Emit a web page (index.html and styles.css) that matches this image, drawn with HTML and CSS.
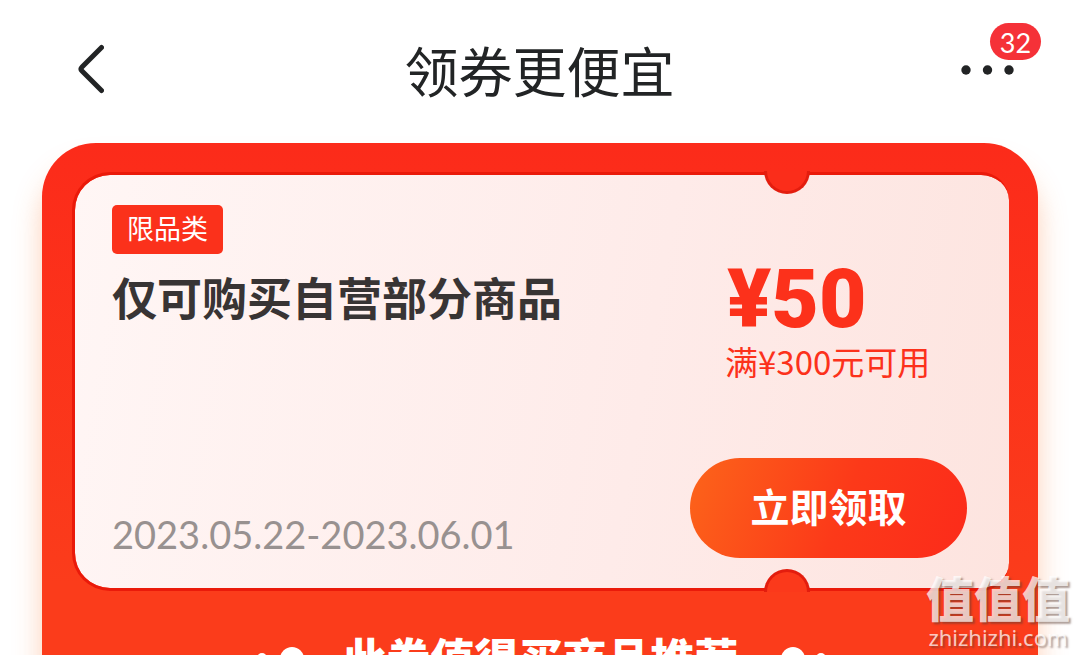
FILE: index.html
```html
<!DOCTYPE html>
<html lang="zh-CN">
<head>
<meta charset="utf-8">
<meta name="viewport" content="width=device-width, initial-scale=1">
<title>领券更便宜</title>
<link rel="stylesheet" href="styles.css">
</head>
<body>
<div class="app">
  <header class="header">
    <button class="icon-button" type="button" aria-label="返回">
      <svg width="28" height="50" viewBox="0 0 28 50"><path d="M25.500 3.500 6 23Q4 25 6 27L25.500 46.500" fill="none" stroke="#222425" stroke-width="5" stroke-linecap="round"/></svg>
    </button>
    <h1 class="title">领券更便宜</h1>
    <button class="icon-button more" type="button" aria-label="更多">
      <svg width="54" height="10" viewBox="0 0 54 10" fill="#222425"><circle cx="5" cy="5" r="4.700"/><circle cx="26.500" cy="5" r="4.700"/><circle cx="48" cy="5" r="4.700"/></svg>
      <span class="badge">32</span>
    </button>
  </header>
  <main class="panel">
    <section class="ticket">
      <span class="notch notch-top"></span>
      <span class="notch notch-bottom"></span>
      <div class="info">
        <span class="tag">限品类</span>
        <h2 class="name">仅可购买自营部分商品</h2>
        <time class="date">2023.05.22-2023.06.01</time>
      </div>
      <div class="offer">
        <strong class="price">¥50</strong>
        <span class="condition">满¥300元可用</span>
        <button class="claim" type="button">立即领取</button>
      </div>
    </section>
    <div class="recommend">
      <svg class="dots" width="48" height="26" viewBox="0 0 48 26" fill="#fff"><circle cx="6" cy="12" r="5"/><circle cx="36" cy="13" r="12"/></svg>
      <h2 class="recommend-title">此券值得买商品推荐</h2>
      <svg class="dots" width="48" height="26" viewBox="0 0 48 26" fill="#fff"><circle cx="15" cy="13" r="12"/><circle cx="43" cy="12" r="5"/></svg>
    </div>
  </main>
  <div class="watermark">
    <span class="watermark-name">值值值</span>
    <span class="watermark-site">zhizhizhi.com</span>
  </div>
</div>
</body>
</html>
```

FILE: styles.css
```css
* { box-sizing: border-box; }
body {
  margin: 0;
  background: #fff;
  color: #222425;
  font-family: "Noto Sans CJK SC", sans-serif;
}
button {
  border: 0;
  padding: 0;
  font-family: inherit;
}
.app {
  position: relative;
  height: 100vh;
  overflow: hidden;
  display: flex;
  flex-direction: column;
}
.header {
  flex: none;
  display: grid;
  grid-template-columns: 1fr auto 1fr;
  align-items: center;
  padding: 30px 63px 33px 76px;
}
.icon-button {
  display: flex;
  justify-self: start;
  background: none;
  margin-bottom: 2px;
}
.icon-button.more {
  position: relative;
  justify-self: end;
  margin-bottom: 1px;
}
.badge {
  position: absolute;
  left: 29px;
  bottom: 15px;
  width: 51px;
  padding-top: 2px;
  border-radius: 19px;
  background: #f53138;
  color: #fff;
  font-family: Lato, sans-serif;
  font-size: 27px;
  line-height: 35px;
  text-align: center;
}
.title {
  margin: 0 0 0 -12px;
  font-size: 54px;
  line-height: 80px;
  font-weight: 400;
}
.panel {
  flex: 1 0 auto;
  margin: 0 40px 0 42px;
  padding: 29px 29px 0 30px;
  border-radius: 54px 54px 0 0;
  background: linear-gradient(#fc2b1a, #fb3c1b 440px);
  box-shadow: 0 24px 28px rgba(250, 120, 50, 0.35);
}
.ticket {
  position: relative;
  display: flex;
  justify-content: space-between;
  min-height: 419px;
  padding: 30px 42px 30px 37px;
  border: 3px solid #ea1a0a;
  border-right: 0;
  border-radius: 38px 28px 28px 38px;
  background: linear-gradient(100deg, #fff6f5, #feebe9 60%, #fde4df) padding-box;
}
.notch {
  position: absolute;
  right: 199px;
  width: 46px;
  height: 23px;
  border: 3px solid #e31d0e;
}
.notch-top {
  top: -4px;
  border-top: 0;
  border-radius: 0 0 23px 23px;
  background: #fb2d1a;
}
.notch-bottom {
  bottom: -4px;
  border-bottom: 0;
  border-radius: 23px 23px 0 0;
  background: #fb391b;
}
.info, .offer {
  display: flex;
  flex-direction: column;
  align-items: flex-start;
}
.tag {
  padding: 0 15px 4px;
  border-radius: 5px;
  background: #fb311b;
  color: #fff;
  font-size: 27px;
  line-height: 45px;
}
.name {
  margin: 10px 0 0;
  color: #383434;
  font-size: 45px;
  line-height: 66px;
  font-weight: 700;
}
.date {
  margin-top: auto;
  color: #989190;
  font-family: Lato, sans-serif;
  font-size: 38px;
  line-height: 48px;
}
.offer {
  width: 277px;
  color: #fc311b;
}
.price {
  margin: 54px 0 0 37px;
  font-family: Roboto, "Noto Sans CJK SC", sans-serif;
  font-size: 82px;
  line-height: 80px;
  font-weight: 900;
}
.condition {
  margin: 0 0 0 35px;
  font-size: 33px;
  line-height: 44px;
}
.claim {
  width: 277px;
  height: 100px;
  margin-top: auto;
  padding-bottom: 6px;
  border-radius: 50px;
  background: linear-gradient(110deg, #fc641a, #fc3919 55%, #fc2b1a);
  color: #fff;
  font-size: 39px;
  font-weight: 700;
}
.recommend {
  display: flex;
  justify-content: center;
  gap: 39px;
  padding-top: 36px;
}
.recommend-title {
  margin: 0;
  color: #fff;
  font-size: 44px;
  line-height: 60px;
  font-weight: 900;
}
.dots { margin-top: 19px; }
.watermark {
  position: absolute;
  right: 8px;
  bottom: 4px;
  display: flex;
  flex-direction: column;
  align-items: center;
  color: rgba(255, 255, 255, 0.74);
  text-shadow: 2px 2px 2px rgba(90, 60, 50, 0.5);
}
.watermark-name {
  font-size: 48px;
  line-height: 54px;
  font-weight: 900;
}
.watermark-site {
  font-family: "Noto Sans", sans-serif;
  font-size: 22px;
  line-height: 28px;
}
```
